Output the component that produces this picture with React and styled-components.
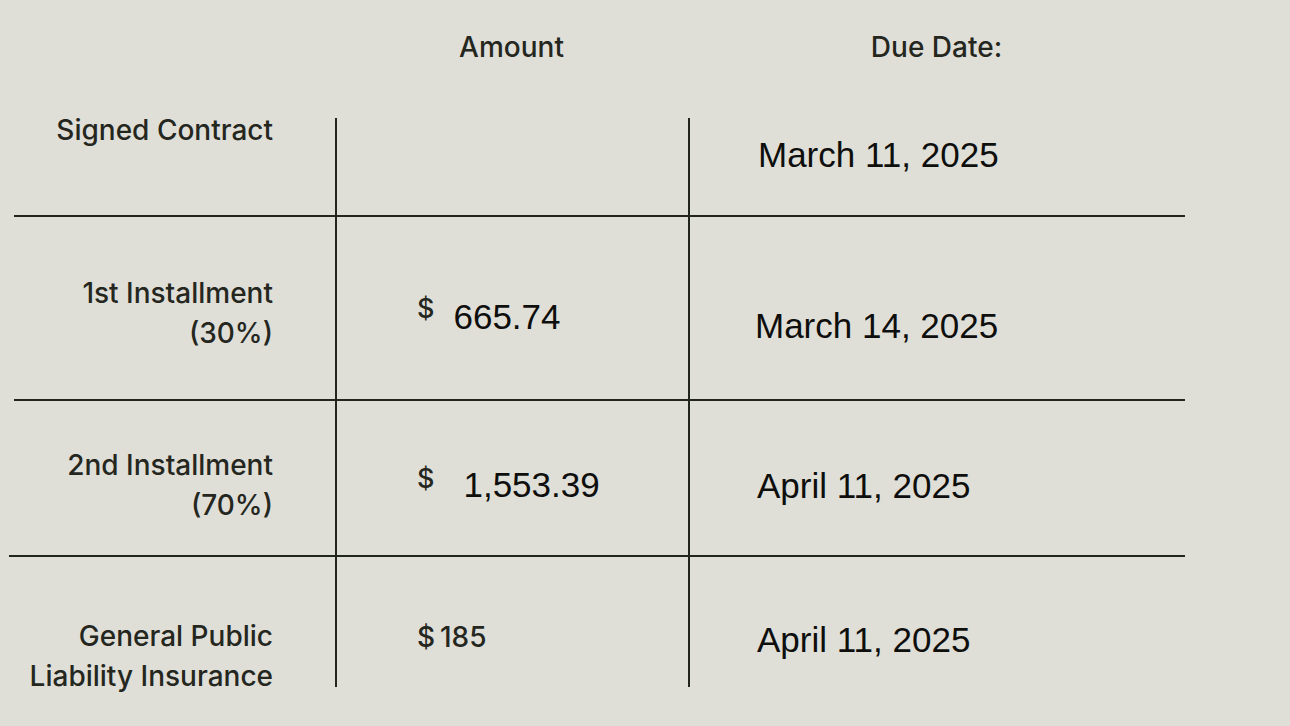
import React from "react";
import styled, { createGlobalStyle } from "styled-components";

const GlobalStyle = createGlobalStyle`
  html, body {
    margin: 0;
    padding: 0;
    background: #dfdfd8;
  }
  * { box-sizing: border-box; }
`;

const LINE = "#22251e";
const COLS = "321px 353px 497px";

const Page = styled.div`
  width: 1290px;
  height: 726px;
  overflow: hidden;
  background: #dfdfd8;
  padding-left: 14px;
`;

const HeaderRow = styled.div`
  display: grid;
  grid-template-columns: ${COLS};
  height: 108px;
  padding-top: 30px;
`;

const HeaderCell = styled.div`
  font-family: Inter, "Liberation Sans", sans-serif;
  font-size: 28px;
  font-weight: 500;
  color: #25271f;
  text-align: center;
`;

const Row = styled.div`
  display: grid;
  grid-template-columns: ${COLS};
  grid-template-rows: ${(p) => p.$h}px;
  width: ${(p) => (p.$wide ? 1176 : 1171)}px;
  margin-left: ${(p) => (p.$wide ? -5 : 0)}px;
  padding-left: ${(p) => (p.$wide ? 5 : 0)}px;
  border-bottom: ${(p) => (p.$last ? "none" : `2px solid ${LINE}`)};
`;

const Label = styled.div`
  font-family: Inter, "Liberation Sans", sans-serif;
  font-size: 28px;
  font-weight: 500;
  line-height: 40px;
  color: #25271f;
  text-align: right;
  padding-right: 62px;
  padding-top: ${(p) => p.$top}px;
`;

const Cell = styled.div`
  border-left: 2px solid ${LINE};
  margin-top: ${(p) => p.$inset || 0}px;
  padding-top: ${(p) => p.$top}px;
  padding-left: ${(p) => p.$left}px;
`;

const Amount = styled.div`
  display: flex;
  align-items: flex-start;
  gap: ${(p) => p.$gap}px;
`;

const Currency = styled.span`
  font-family: Inter, "Liberation Sans", sans-serif;
  font-size: 27px;
  font-weight: 500;
  line-height: 27px;
  color: #25271f;
  margin-top: ${(p) => p.$lift}px;
`;

const Value = styled.span`
  font-family: "Liberation Sans", Arial, sans-serif;
  font-size: 35px;
  line-height: 38px;
  color: #0e0e0c;
  white-space: nowrap;
`;

const PlainAmount = styled.span`
  font-family: Inter, "Liberation Sans", sans-serif;
  font-size: 28px;
  font-weight: 500;
  line-height: 40px;
  color: #25271f;
  white-space: nowrap;
`;

export default function App() {
  return (
    <>
      <GlobalStyle />
      <Page>
        <HeaderRow>
          <HeaderCell />
          <HeaderCell>Amount</HeaderCell>
          <HeaderCell>Due Date:</HeaderCell>
        </HeaderRow>

        <Row $h={107}>
          <Label $top={2}>Signed Contract</Label>
          <Cell $inset={10} $top={0} $left={80} />
          <Cell $inset={10} $top={18} $left={68}>
            <Value>March 11, 2025</Value>
          </Cell>
        </Row>

        <Row $h={182}>
          <Label $top={56}>
            1st Installment
            <br />
            (30%)
          </Label>
          <Cell $top={81} $left={80}>
            <Amount $gap={19}>
              <Currency $lift={-3}>$</Currency>
              <Value>665.74</Value>
            </Amount>
          </Cell>
          <Cell $top={90} $left={65}>
            <Value>March 14, 2025</Value>
          </Cell>
        </Row>

        <Row $h={154} $wide>
          <Label $top={44}>
            2nd Installment
            <br />
            (70%)
          </Label>
          <Cell $top={65} $left={80}>
            <Amount $gap={29}>
              <Currency $lift={-1}>$</Currency>
              <Value>1,553.39</Value>
            </Amount>
          </Cell>
          <Cell $top={66} $left={67}>
            <Value>April 11, 2025</Value>
          </Cell>
        </Row>

        <Row $h={130} $last>
          <Label $top={59}>
            General Public
            <br />
            Liability Insurance
          </Label>
          <Cell $top={60} $left={80}>
            <PlainAmount>$&#8201;185</PlainAmount>
          </Cell>
          <Cell $top={64} $left={67}>
            <Value>April 11, 2025</Value>
          </Cell>
        </Row>
      </Page>
    </>
  );
}
